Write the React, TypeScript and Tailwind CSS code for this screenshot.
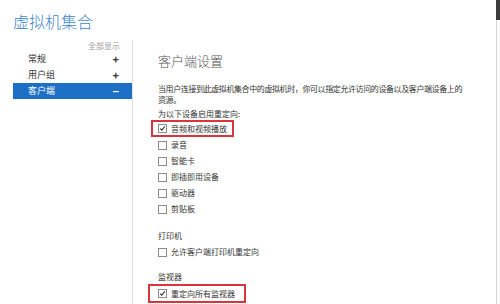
import React from "react";

const Check = ({ checked }: { checked?: boolean }) => (
  <span className="w-[9px] h-[9px] border border-[#8c8c8c] bg-white flex items-center justify-center shrink-0">
    {checked && (
      <svg width="9" height="9" viewBox="0 0 9 9" className="block">
        <path d="M1.6 4.6 L3.6 6.6 L7.6 1.6" fill="none" stroke="#2b2b2b" strokeWidth="1.4" />
      </svg>
    )}
  </span>
);

const Row = ({ label, checked }: { label: string; checked?: boolean }) => (
  <div className="h-[16px] flex items-center gap-[4px] text-[8px] leading-[16px] text-[#333]">
    <Check checked={checked} />
    <span>{label}</span>
  </div>
);

export default function App() {
  return (
    <div className="w-[500px] h-[304px] bg-white flex overflow-hidden font-['Noto_Sans_CJK_SC','Noto_Sans',sans-serif]">
      <div className="flex-1 flex flex-col min-w-0">
        <div className="h-[40px] pl-[13px] pt-[11px] text-[16px] leading-[20px] font-light text-[#4186c8]">虚拟机集合</div>
        <div className="flex flex-1">
          <aside className="ml-[13px] w-[120px] border-r border-[#e2e2e2] flex flex-col">
            <div className="text-right pr-[12px] text-[8px] leading-[11px] text-[#9c9c9c]">全部显示</div>
            <div className="h-[16px] flex items-center justify-between pl-[15px] pr-[13px] text-[9px] text-[#333]">
              <span>常规</span>
              <span className="text-[11px] font-bold">+</span>
            </div>
            <div className="h-[16px] flex items-center justify-between pl-[15px] pr-[13px] text-[9px] text-[#333]">
              <span>用户组</span>
              <span className="text-[11px] font-bold">+</span>
            </div>
            <div className="h-[16px] flex items-center justify-between pl-[15px] pr-[13px] text-[9px] text-white bg-[#1c6fc4]">
              <span>客户端</span>
              <span className="text-[11px] font-bold">−</span>
            </div>
          </aside>
          <main className="pl-[25px] pt-[13px] flex flex-col items-start">
            <div className="text-[13px] leading-[16px] font-light text-[#555]">客户端设置</div>
            <div className="mt-[14px] text-[8px] leading-[11px] tracking-[-0.4px] text-[#333] whitespace-nowrap">
              当用户连接到此虚拟机集合中的虚拟机时，你可以指定允许访问的设备以及客户端设备上的
              <br />
              资源。
            </div>
            <div className="mt-[3px] text-[8px] leading-[11px] text-[#333]">为以下设备启用重定向:</div>
            <div className="mt-[1px] ml-[-7px] w-[83px] h-[17px] border-2 border-[#d8353d] pl-[5px] flex items-center">
              <Row label="音频和视频播放" checked />
            </div>
            <Row label="录音" />
            <Row label="智能卡" />
            <Row label="即插即用设备" />
            <Row label="驱动器" />
            <Row label="剪贴板" />
            <div className="mt-[13px] text-[8px] leading-[11px] text-[#333]">打印机</div>
            <div className="mt-[3px]">
              <Row label="允许客户端打印机重定向" />
            </div>
            <div className="mt-[11px] text-[8px] leading-[11px] text-[#333]">监视器</div>
            <div className="mt-[2px] ml-[-10px] w-[98px] h-[19px] border-2 border-[#d8353d] pl-[8px] flex items-center">
              <Row label="重定向所有监视器" checked />
            </div>
          </main>
        </div>
      </div>
      <div className="w-[4px] flex flex-col">
        <div className="h-[20px] bg-[#3d3d3d]" />
        <div className="flex-1 border-l border-[#d4d4d4]" />
      </div>
    </div>
  );
}
